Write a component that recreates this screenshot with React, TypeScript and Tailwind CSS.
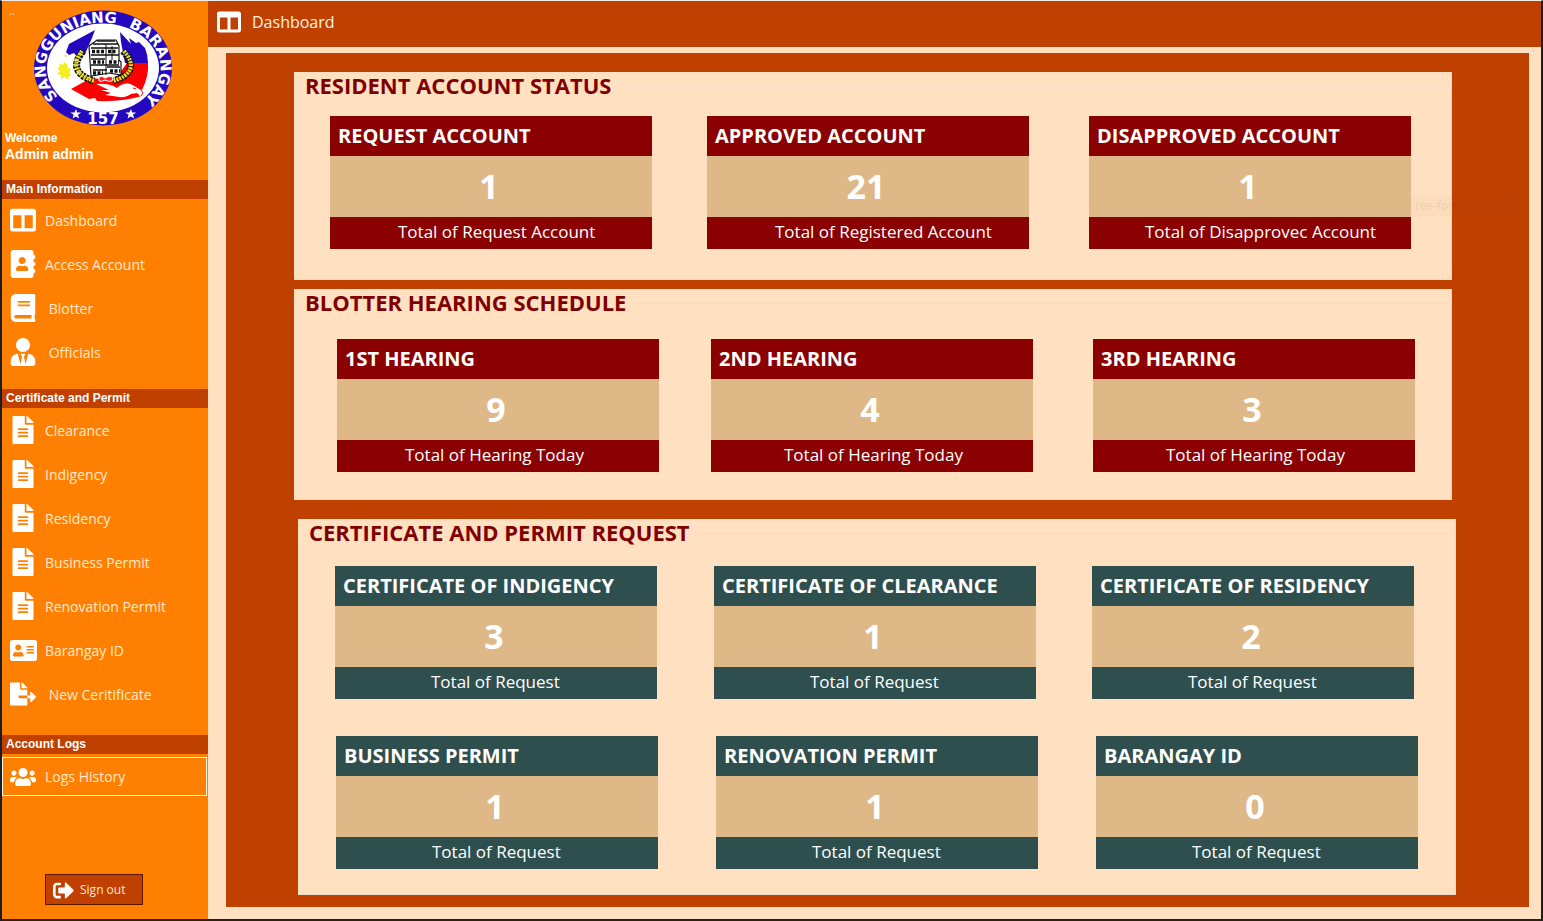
import type { ReactNode } from "react";
import {
  FaAddressBook,
  FaAddressCard,
  FaBook,
  FaColumns,
  FaFileAlt,
  FaFileExport,
  FaSignOutAlt,
  FaUserTie,
  FaUsers,
} from "react-icons/fa";

type Stat = { title: string; value: number; note: string; notePad: string };

const accounts: Stat[] = [
  { title: "REQUEST ACCOUNT", value: 1, note: "Total of Request Account", notePad: "pl-[68px]" },
  { title: "APPROVED ACCOUNT", value: 21, note: "Total of Registered Account", notePad: "pl-[68px]" },
  { title: "DISAPPROVED ACCOUNT", value: 1, note: "Total of Disapprovec Account", notePad: "pl-14" },
];

const hearings: Stat[] = [
  { title: "1ST HEARING", value: 9, note: "Total of Hearing Today", notePad: "pl-[68px]" },
  { title: "2ND HEARING", value: 4, note: "Total of Hearing Today", notePad: "pl-[73px]" },
  { title: "3RD HEARING", value: 3, note: "Total of Hearing Today", notePad: "pl-[73px]" },
];

const certificates: Stat[] = [
  { title: "CERTIFICATE OF INDIGENCY", value: 3, note: "Total of Request", notePad: "pl-24" },
  { title: "CERTIFICATE OF CLEARANCE", value: 1, note: "Total of Request", notePad: "pl-24" },
  { title: "CERTIFICATE OF RESIDENCY", value: 2, note: "Total of Request", notePad: "pl-24" },
];

const permits: Stat[] = [
  { title: "BUSINESS PERMIT", value: 1, note: "Total of Request", notePad: "pl-24" },
  { title: "RENOVATION PERMIT", value: 1, note: "Total of Request", notePad: "pl-24" },
  { title: "BARANGAY ID", value: 0, note: "Total of Request", notePad: "pl-24" },
];

function Seal() {
  return (
    <svg
      viewBox="0 0 140 116"
      className="h-[116px] w-[140px] overflow-visible"
      role="img"
      aria-label="Sangguniang Barangay 157"
    >
      <defs>
        <path
          id="ring"
          d="M70 103.500 A57.500 45.500 0 0 1 12.500 58 A57.500 45.500 0 0 1 70 12.500 A57.500 45.500 0 0 1 127.500 58 A57.500 45.500 0 0 1 70 103.500"
        />
        <clipPath id="inner">
          <ellipse cx="70" cy="58" rx="56" ry="44.500" />
        </clipPath>
      </defs>
      <ellipse cx="70" cy="58" rx="69" ry="57.500" fill="#2408c0" />
      <ellipse cx="70" cy="58" rx="56" ry="44.500" fill="#fff" />
      <g clipPath="url(#inner)">
        <path d="M33 42 L36 34 L62 20 L59 28 L52 44 L47 41 L44 47 L41 43 L36 45 Z" fill="#2408c0" />
        <path d="M87 22 L98 34 L96 28 L103 33 L106 32 L112 38 Q115 45 115 53 L92 53 L88 32 Z" fill="#2408c0" />
        <path d="M94 53 H115 Q116 66 109 80 L96 75 L80 72 Z" fill="#f00" />
        <path d="M38 79 L58 68 L96 72 L109 86 Q90 92 64 91 L62 88 L56 89 Z" fill="#f00" />
      </g>
      <path
        d="M63 74 Q76 73 84 78 Q90 72 98 74 Q107 78 110 84 L108 87 L104 83 L98 84 Q92 89 80 86 L72 85 L78 83 L68 80 L76 80 Z"
        fill="#fff"
      />
      <path d="M98 74 Q108 78 110 83 L108 86 M100 78 l3 1" fill="none" stroke="#f00" strokeWidth="1" />
      <path d="M34 54 l-3 -2 -1 3 -4 -2 1 4 -3 1 3 3 -3 3 4 1 0 4 4 -2 3 3 1 -4 3 0 -3 -3 2 -4 -3 -1Z M31 45 l3 0 -1 3Z M47 68 l3 1 -2 2Z" fill="#f4ee20" />
      <path d="M50 41 Q33 62 61 71 M90 41 Q109 62 80 71" fill="none" stroke="#111" strokeWidth="7" strokeDasharray="3 1" />
      <path d="M49 41 Q33 62 61 71 M91 41 Q109 62 80 71" fill="none" stroke="#e8e010" strokeWidth="4" strokeDasharray="2 1" />
      <path d="M56 36 L64 30 H83 L86 36 V50 L88 52 V65 L76 63 L58 66 Z" fill="#fff" stroke="#111" strokeWidth="1.200" />
      <path d="M64 31 H82 M60 34 H85 M58 38 H85 M58 45 H86 M58 49 H72 M58 55 H86 M60 60 H74 M74 57 H87" fill="none" stroke="#111" strokeWidth="1.600" />
      <path d="M59 41.500 H72 M75 41.500 H84 M60 52 H71 M76 52 H86 M60 63 H70 M77 61 H87" fill="none" stroke="#111" strokeWidth="3.500" strokeDasharray="3 1.500" />
      <path d="M73 34 V65 M79 36 V50" fill="none" stroke="#111" strokeWidth="1" />
      <path d="M66 67 q3 -2 6 1 q4 -3 8 -1 l-1 4 q-4 1 -7 -1 q-3 2 -6 1Z" fill="#f22" stroke="#fff" strokeWidth="1" />
      <g fill="#fff" fontFamily="'DejaVu Sans', sans-serif" fontWeight="700" fontSize="15">
        <text>
          <textPath href="#ring" startOffset="49">
            SANGGUNIANG
          </textPath>
        </text>
        <text>
          <textPath href="#ring" startOffset="188">
            BARANGAY
          </textPath>
        </text>
        <text x="70" y="114" textAnchor="middle">
          157
        </text>
      </g>
      <path
        d="M43 99 l1.200 3.400 4 0 -3.200 2.400 1.200 3.800 -3.400 -2.200 -3.200 2.200 1 -3.800 -3.200 -2.400 4 0Z M98 99 l1.200 3.400 4 0 -3.200 2.400 1.200 3.800 -3.400 -2.200 -3.200 2.200 1 -3.800 -3.200 -2.400 4 0Z"
        fill="#fff"
      />
    </svg>
  );
}

function NavHeading({ children }: { children: ReactNode }) {
  return (
    <h2 className="h-[19px] bg-[#c04000] pl-1 font-['Liberation_Sans',sans-serif] text-[12px] leading-[18px] font-bold text-white">
      {children}
    </h2>
  );
}

function NavItem({ icon, label, active }: { icon: ReactNode; label: string; active?: boolean }) {
  return (
    <a
      href="#"
      className={
        active
          ? "mt-[3px] mr-px flex h-[39px] items-center gap-2 border border-[#fff4e0] pl-[6px] text-[14px] text-[#ffe9cf]"
          : "flex h-11 items-center gap-2 pl-[7px] text-[14px] text-[#ffe9cf]"
      }
    >
      <span className="flex w-7 justify-center text-white">{icon}</span>
      <span className="whitespace-pre">{label}</span>
    </a>
  );
}

function StatCard({ stat, tone }: { stat: Stat; tone: string }) {
  return (
    <article className="w-full max-w-[322px] text-white">
      <h3 className={`h-10 pl-2 text-[20px] leading-10 font-bold whitespace-nowrap ${tone}`}>{stat.title}</h3>
      <p className="h-[61px] bg-[#deb887] pr-1 text-center text-[34px] leading-[61px] font-bold">{stat.value}</p>
      <p className={`h-8 text-[17px] leading-[30px] whitespace-nowrap ${tone} ${stat.notePad}`}>{stat.note}</p>
    </article>
  );
}

function StatRow({ stats, tone, layout }: { stats: Stat[]; tone: string; layout: string }) {
  return (
    <div className={`grid ${layout}`}>
      {stats.map((stat) => (
        <StatCard key={stat.title} stat={stat} tone={tone} />
      ))}
    </div>
  );
}

function Group({ title, className, children }: { title: string; className: string; children: ReactNode }) {
  return (
    <section className={`border-r border-b border-[#e9dccb] bg-[#ffe0c0] ${className}`}>
      <div className="flex h-7 items-center gap-2 pl-[11px]">
        <h2 className="pb-[2px] text-[22px] leading-[26px] font-bold whitespace-nowrap text-[#800000]">{title}</h2>
        <span className="h-px flex-1 bg-[#f5dcc4]" />
      </div>
      {children}
    </section>
  );
}

export default function App() {
  const red = "bg-[#8b0000]";
  const slate = "bg-[#2f4f4f]";
  return (
    <div className="flex min-h-screen border-x-2 border-t border-b-2 border-x-[#1c1c22] border-t-[#f3ece4] border-b-[#2b211c] bg-[#ffe0c0] font-['Open_Sans','Noto_Sans',sans-serif]">
      <aside className="relative flex w-[206px] shrink-0 flex-col bg-[#ff8000]">
        <span className="absolute top-1 left-[7px] text-[10px] leading-3 text-[#ffe9cf]">..</span>
        <div className="pt-[9px] pl-[31px]">
          <Seal />
        </div>
        <div className="mb-[18px] pt-1 pl-[3px] font-['Liberation_Sans',sans-serif] font-bold text-white">
          <p className="text-[12px] leading-4">Welcome</p>
          <p className="text-[14px] leading-4">Admin admin</p>
        </div>
        <nav>
          <NavHeading>Main Information</NavHeading>
          <div className="-mt-px mb-[15px]">
            <NavItem icon={<FaColumns size={26} />} label="Dashboard" />
            <NavItem icon={<FaAddressBook size={28} />} label="Access Account" />
            <NavItem icon={<FaBook size={28} />} label=" Blotter" />
            <NavItem icon={<FaUserTie size={28} />} label=" Officials" />
          </div>
          <NavHeading>Certificate and Permit</NavHeading>
          <div className="mb-[19px]">
            <NavItem icon={<FaFileAlt size={28} />} label="Clearance" />
            <NavItem icon={<FaFileAlt size={28} />} label="Indigency" />
            <NavItem icon={<FaFileAlt size={28} />} label="Residency" />
            <NavItem icon={<FaFileAlt size={28} />} label="Business Permit" />
            <NavItem icon={<FaFileAlt size={28} />} label="Renovation Permit" />
            <NavItem icon={<FaAddressCard size={27} />} label="Barangay ID" />
            <NavItem icon={<FaFileExport size={26} />} label=" New Ceritificate" />
          </div>
          <NavHeading>Account Logs</NavHeading>
          <NavItem icon={<FaUsers size={26} />} label="Logs History" active />
        </nav>
        <button
          type="button"
          className="mt-auto mb-[14px] ml-[43px] flex h-[31px] w-[98px] items-center gap-[6px] border border-[#5a1400] bg-[#c04000] pt-px pl-[7px] text-[12px] text-[#ffe9cf]"
        >
          <FaSignOutAlt size={21} className="text-white" />
          Sign out
        </button>
      </aside>

      <div className="flex min-w-0 flex-1 flex-col">
        <header className="flex h-[46px] items-center gap-[11px] bg-[#c04000] pb-[5px] pl-[9px] text-white">
          <FaColumns size={24} />
          <h1 className="text-[16px] leading-6 text-[#fff0e0]">Dashboard</h1>
        </header>
        <main className="relative mt-[6px] mr-3 mb-3 ml-[18px] flex-1 bg-[#c04000] pt-[19px] pr-[73px] pb-3 pl-[68px]">
          <Group title="RESIDENT ACCOUNT STATUS" className="mr-1 h-[208px]">
            <StatRow stats={accounts} tone={red} layout="mt-4 grid-cols-[377fr_382fr_322fr] pr-10 pl-9" />
          </Group>
          <Group title="BLOTTER HEARING SCHEDULE" className="mt-[9px] mr-1 h-[211px]">
            <StatRow stats={hearings} tone={red} layout="mt-[22px] grid-cols-[374fr_382fr_322fr] pr-9 pl-[43px]" />
          </Group>
          <Group title="CERTIFICATE AND PERMIT REQUEST" className="mt-[19px] ml-1 h-[376px]">
            <StatRow stats={certificates} tone={slate} layout="mt-[19px] grid-cols-[379fr_378fr_322fr] pr-[41px] pl-[37px]" />
            <StatRow stats={permits} tone={slate} layout="mt-[37px] grid-cols-[380fr_380fr_322fr] pr-[37px] pl-[38px]" />
          </Group>
          <span className="absolute top-[142px] right-0 h-[22px] w-[118px] bg-[#80604008] pl-1 font-['Noto_Sans',sans-serif] text-[12px] leading-[22px] text-[#60302018]">
            ree-form Snip
          </span>
        </main>
      </div>
    </div>
  );
}
